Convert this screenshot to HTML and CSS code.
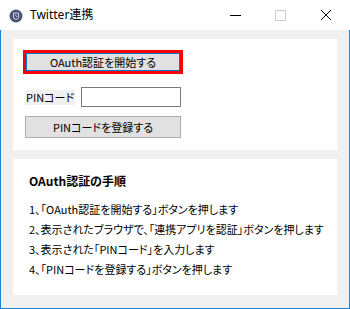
FILE: index.html
```html
<!DOCTYPE html>
<html lang="ja">
<head>
    <meta charset="UTF-8">
    <title>Twitter連携</title>
    <link rel="stylesheet" href="styles.css">
</head>
<body>
    <div class="window">
        <!-- Title bar -->
        <div class="titlebar">
            <svg class="app-icon" width="14" height="14" viewBox="0 0 14 14">
                <circle cx="7" cy="7" r="6.5" fill="#4b5479"/>
                <path d="M4.5 4 L9.5 4 L9.5 9 L7 10.5 L4.5 9 Z" fill="none" stroke="#c9cde0" stroke-width="1"/>
                <path d="M6 5.5 L8 8" stroke="#c9cde0" stroke-width="1"/>
            </svg>
            <span class="title">Twitter連携</span>
            <div class="caption-buttons">
                <svg class="cap" width="46" height="30" viewBox="0 0 46 30">
                    <path d="M18 15.5 H29" stroke="#000" stroke-width="1"/>
                </svg>
                <svg class="cap" width="46" height="30" viewBox="0 0 46 30">
                    <rect x="17.5" y="10.5" width="10" height="10" fill="none" stroke="#cccccc" stroke-width="1"/>
                </svg>
                <svg class="cap" width="46" height="30" viewBox="0 0 46 30">
                    <path d="M17 10 L27 20 M27 10 L17 20" stroke="#000" stroke-width="1"/>
                </svg>
            </div>
        </div>

        <!-- Client area -->
        <div class="client">
            <div class="panel panel-auth">
                <div class="highlight">
                    <button class="btn btn-focus">OAuth認証を開始する</button>
                </div>
                <div class="pin-row">
                    <label class="pin-label" for="pin">PINコード</label>
                    <input class="pin-input" type="text" id="pin">
                </div>
                <button class="btn btn-register">PINコードを登録する</button>
            </div>

            <div class="panel panel-help">
                <h2 class="help-title">OAuth認証の手順</h2>
                <ol class="steps">
                    <li>1、「OAuth認証を開始する」ボタンを押します</li>
                    <li>2、表示されたブラウザで、「連携アプリを認証」ボタンを押します</li>
                    <li>3、表示された「PINコード」を入力します</li>
                    <li>4、「PINコードを登録する」ボタンを押します</li>
                </ol>
            </div>
        </div>
    </div>
</body>
</html>
```

FILE: styles.css
```css
/* Page */
body {
    margin: 0;
    padding: 0;
    font-family: "Noto Sans CJK JP", "Noto Sans", sans-serif;
    font-size: 11px;
    color: #000;
    background-color: #fff;
}

.window {
    width: 350px;
    height: 309px;
}

/* Title bar */
.titlebar {
    height: 30px;
    display: flex;
    align-items: center;
    background-color: #fff;
}

.app-icon {
    margin-left: 9px;
    margin-top: 1px;
}

.title {
    margin-left: 7px;
    font-family: "Noto Sans", "Noto Sans CJK JP", sans-serif;
    font-size: 12px;
    line-height: 30px;
}

.caption-buttons {
    margin-left: auto;
    display: flex;
}

.cap {
    display: block;
}

/* Client area */
.client {
    height: 279px;
    box-sizing: border-box;
    background-color: #f0f0f0;
    border: 1px solid #1883d7;
    border-top: none;
    padding: 9px 12px 0 12px;
}

.panel {
    background-color: #fff;
    box-sizing: border-box;
}

.panel-auth {
    height: 111px;
    padding: 11px 0 0 10px;
}

.panel-help {
    height: 136px;
    margin-top: 9px;
    padding: 12px 0 0 16px;
}

/* Buttons */
.btn {
    display: block;
    margin: 0;
    padding: 0;
    font-family: "Noto Sans CJK JP", sans-serif;
    font-size: 11px;
    font-feature-settings: "palt";
    color: #000;
    background-color: #e1e1e1;
    border: 1px solid #adadad;
    box-sizing: border-box;
}

.highlight {
    width: 160px;
    height: 24px;
    box-sizing: border-box;
    border: 3px solid #ff0000;
}

.btn-focus {
    width: 154px;
    height: 18px;
    border-color: #0078d7;
    line-height: 16px;
}

.btn-register {
    width: 156px;
    height: 22px;
    margin: 9px 0 0 2px;
    line-height: 20px;
}

/* PIN row */
.pin-row {
    display: flex;
    align-items: center;
    height: 20px;
    margin: 13px 0 0 2px;
}

.pin-label {
    width: 50px;
    height: 15px;
    line-height: 15px;
    padding-left: 1px;
    box-sizing: border-box;
    white-space: nowrap;
    background-color: #f0f0f0;
    font-feature-settings: "palt";
}

.pin-input {
    width: 100px;
    height: 20px;
    margin: 0 0 0 6px;
    padding: 0;
    box-sizing: border-box;
    border: 1px solid #7a7a7a;
    background-color: #fff;
}

/* Help text */
.help-title {
    margin: 0;
    font-size: 12px;
    font-weight: bold;
    line-height: 20px;
    font-feature-settings: "palt";
}

.steps {
    list-style: none;
    margin: 8px 0 0 0;
    padding: 0;
    font-feature-settings: "palt";
}

.steps li {
    line-height: 20px;
    white-space: nowrap;
}
```
